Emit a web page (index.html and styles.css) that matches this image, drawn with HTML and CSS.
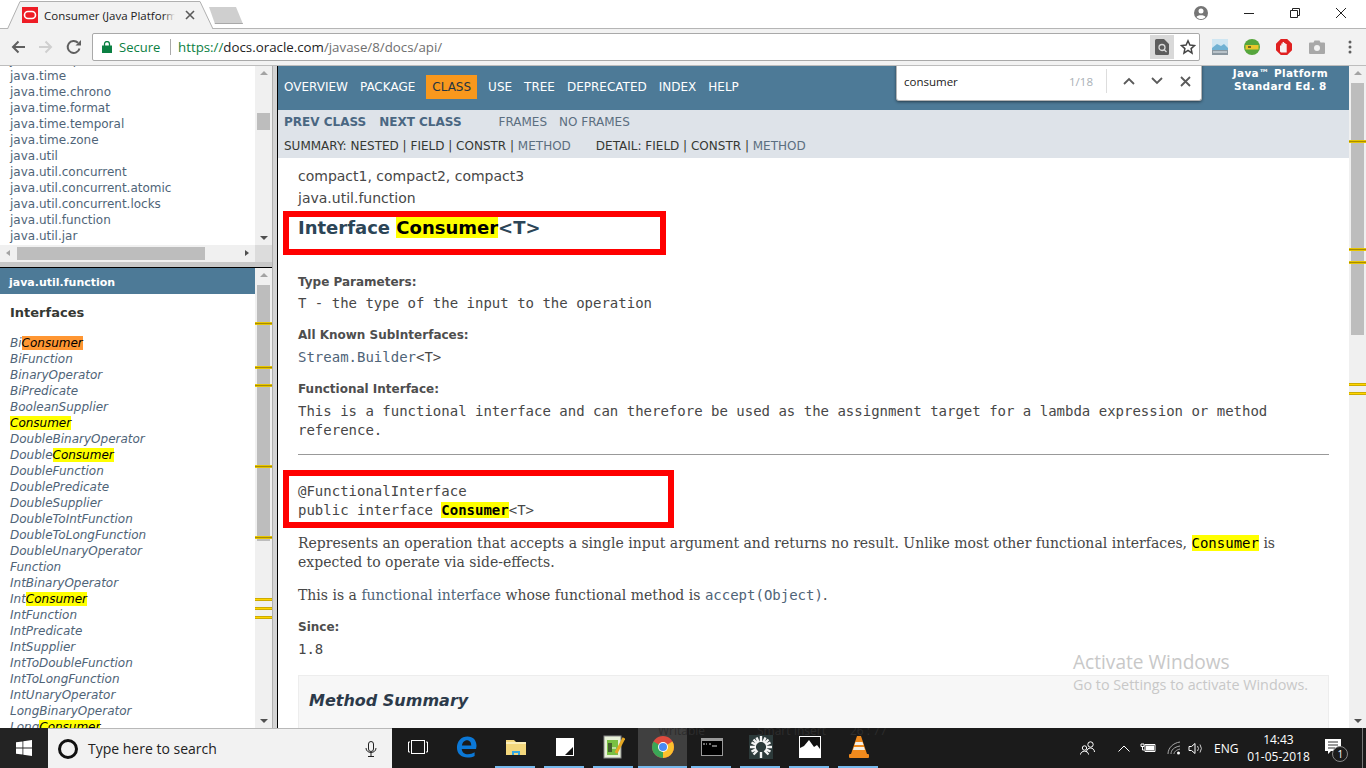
FILE: index.html
```html
<!DOCTYPE html>
<html lang="en">
<head>
<meta charset="utf-8">
<title>Consumer (Java Platform SE 8)</title>
<link rel="stylesheet" href="styles.css">
</head>
<body>
<div class="screen">
  <header class="tabstrip">
    <div class="tab">
      <svg class="tab-shape" width="207" height="29" viewBox="0 0 207 29"><path d="M0.500 28L13 .500H193L206 28" fill="#f2f2f2" stroke="#b0b0b0"/></svg>
      <svg class="favicon" width="16" height="16" viewBox="0 0 16 16"><rect width="16" height="16" fill="#ee1c25"/><rect x="2.500" y="4.500" width="11" height="7" rx="3.500" fill="none" stroke="#fff" stroke-width="1.600"/></svg>
      <span class="tab-title">Consumer (Java Platform</span>
      <svg class="tab-x" width="10" height="10" viewBox="0 0 10 10"><path d="M1 1l8 8M9 1l-8 8" stroke="#5a5a5a" stroke-width="1.600"/></svg>
    </div>
    <div class="newtab"></div>
    <div class="spacer"></div>
    <svg class="profile" width="16" height="16" viewBox="0 0 16 16"><circle cx="8" cy="8" r="7" fill="#757575"/><circle cx="8" cy="6" r="2.500" fill="#fff"/><path d="M3.500 12c1-2.200 8-2.200 9 0-1.200 1.400-2.800 2-4.500 2s-3.300-.6-4.500-2z" fill="#fff"/></svg>
    <div class="winbtns">
      <svg width="12" height="12" viewBox="0 0 12 12"><path d="M1 6.500h10" stroke="#222"/></svg>
      <svg width="12" height="12" viewBox="0 0 12 12"><path d="M1.500 3.500h7v7h-7zM3.500 3.500v-2h7v7h-2" fill="none" stroke="#222"/></svg>
      <svg width="12" height="12" viewBox="0 0 12 12"><path d="M1 1l10 10M11 1l-10 10" stroke="#222"/></svg>
    </div>
  </header>
  <div class="toolbar">
    <svg class="nav-ic" width="16" height="16" viewBox="0 0 16 16"><path d="M15 8H3M8.500 2.500L3 8l5.500 5.500" fill="none" stroke="#5f5f5f" stroke-width="2"/></svg>
    <svg class="nav-ic" width="16" height="16" viewBox="0 0 16 16"><path d="M1 8h12M7.500 2.500L13 8l-5.500 5.500" fill="none" stroke="#cfcfcf" stroke-width="2"/></svg>
    <svg class="nav-ic" width="16" height="16" viewBox="0 0 16 16"><path d="M13.500 9.500A6 6 0 1 1 12 3.800" fill="none" stroke="#5f5f5f" stroke-width="2"/><path d="M9.500 6.500H15V1z" fill="#5f5f5f"/></svg>
    <div class="omnibox">
      <svg class="lock" width="10" height="12" viewBox="0 0 10 12"><rect y="4.500" width="10" height="7.500" fill="#0b8043"/><path d="M2.500 5V3a2.500 2.500 0 0 1 5 0v2" fill="none" stroke="#0b8043" stroke-width="1.300"/></svg>
      <span class="secure">Secure</span>
      <span class="omni-sep"></span>
      <span class="url"><span class="url-s">https://</span><span class="url-h">docs.oracle.com</span>/javase/8/docs/api/</span>
      <span class="spacer"></span>
      <span class="find-ic"><svg width="14" height="16" viewBox="0 0 14 16"><path d="M0 1.500A1.500 1.500 0 0 1 1.500 0H9l5 5v9.500a1.500 1.500 0 0 1-1.500 1.500h-11A1.500 1.500 0 0 1 0 14.500z" fill="#5c5c5c"/><circle cx="7" cy="8.500" r="3" fill="none" stroke="#d9d9d9" stroke-width="1.300"/><path d="M9 10.500l2.500 2.500" stroke="#d9d9d9" stroke-width="1.300"/></svg></span>
      <svg class="star" width="16" height="16" viewBox="0 0 16 16"><path d="M8 1.800l1.900 4.200 4.600.5-3.400 3.100.9 4.500L8 11.300l-4 2.800.9-4.500L1.500 6.500 6.100 6z" fill="none" stroke="#444" stroke-width="1.500"/></svg>
    </div>
    <div class="ext">
      <svg width="16" height="16" viewBox="0 0 16 16"><rect width="16" height="16" fill="#cfe6f2"/><path d="M0 9l5-4 4 2 3-2 4 4v2H0z" fill="#6fb1d3"/><rect y="11" width="16" height="5" fill="#8a97a0"/><path d="M1 13h14" stroke="#e8eef2"/></svg>
      <svg width="16" height="16" viewBox="0 0 16 16"><circle cx="8" cy="8" r="8" fill="#56a63c"/><rect x="1.500" y="6" width="13" height="4.500" fill="#e9c62c"/><path d="M4 8h3" stroke="#4a4a20" stroke-width="1.500"/></svg>
      <svg width="16" height="16" viewBox="0 0 16 16"><path d="M4.800 0h6.400L16 4.800v6.400L11.200 16H4.800L0 11.200V4.800z" fill="#e02020"/><path d="M5 13.500l-1-1V6.500h1.300V4.500h1.300V3h1.500v1h1.300v1h1.300v8.500z" fill="#f6f0f0"/></svg>
      <svg class="cam" width="16" height="14" viewBox="0 0 16 14"><path d="M1 2.500h3.500L5.500.5h5l1 2H15a1 1 0 0 1 1 1V13a1 1 0 0 1-1 1H1a1 1 0 0 1-1-1V3.500a1 1 0 0 1 1-1z" fill="#a8a8a8"/><circle cx="8" cy="8" r="3" fill="#f2f2f2"/></svg>
      <svg class="dots" width="4" height="14" viewBox="0 0 4 14"><circle cx="2" cy="2" r="1.500" fill="#5f5f5f"/><circle cx="2" cy="7" r="1.500" fill="#5f5f5f"/><circle cx="2" cy="12" r="1.500" fill="#5f5f5f"/></svg>
    </div>
  </div>

  <main class="viewport">
    <aside class="leftcol">
      <div class="pkgpane">
        <div class="pkgrow-wrap">
          <ul class="pkglist">
            <li>java.text.spi</li><li>java.time</li><li>java.time.chrono</li><li>java.time.format</li><li>java.time.temporal</li><li>java.time.zone</li><li>java.util</li><li>java.util.concurrent</li><li>java.util.concurrent.atomic</li><li>java.util.concurrent.locks</li><li>java.util.function</li><li>java.util.jar</li>
          </ul>
          <div class="vbar small">
            <span class="arr up"></span>
            <div class="vtrack pkgtrack"><div class="vthumb pkgthumb"></div></div>
            <span class="arr down"></span>
          </div>
        </div>
        <div class="hbar">
          <span class="arr left"></span>
          <div class="hthumb"></div>
          <span class="arr right"></span>
          <span class="corner"></span>
        </div>
      </div>
      <div class="classpane">
        <div class="classmain">
          <div class="classhead">java.util.function</div>
          <h2 class="classtitle">Interfaces</h2>
          <ul class="classlist">
            <li>Bi<mark class="cur">Consumer</mark></li>
            <li>BiFunction</li>
            <li>BinaryOperator</li>
            <li>BiPredicate</li>
            <li>BooleanSupplier</li>
            <li><mark>Consumer</mark></li>
            <li>DoubleBinaryOperator</li>
            <li>Double<mark>Consumer</mark></li>
            <li>DoubleFunction</li>
            <li>DoublePredicate</li>
            <li>DoubleSupplier</li>
            <li>DoubleToIntFunction</li>
            <li>DoubleToLongFunction</li>
            <li>DoubleUnaryOperator</li>
            <li>Function</li>
            <li>IntBinaryOperator</li>
            <li>Int<mark>Consumer</mark></li>
            <li>IntFunction</li>
            <li>IntPredicate</li>
            <li>IntSupplier</li>
            <li>IntToDoubleFunction</li>
            <li>IntToLongFunction</li>
            <li>IntUnaryOperator</li>
            <li>LongBinaryOperator</li>
            <li>Long<mark>Consumer</mark></li>
          </ul>
        </div>
        <div class="vbar lower">
          <span class="arr up"></span>
          <div class="vtrack"><div class="vthumb classthumb"></div></div>
          <span class="arr down"></span>
          <i class="tick t1"></i><i class="tick t2"></i><i class="tick t3"></i><i class="tick t4"></i><i class="tick t5"></i><i class="tick off t6"></i><i class="tick off t7"></i><i class="tick off t8"></i>
        </div>
      </div>
    </aside>
    <div class="divider"></div>
    <section class="docframe">
      <div class="docmain">
        <nav class="topnav">
          <a>OVERVIEW</a><a>PACKAGE</a><a class="active">CLASS</a><a>USE</a><a>TREE</a><a>DEPRECATED</a><a>INDEX</a><a>HELP</a>
          <div class="aboutlang">Java™ Platform<br>Standard Ed. 8</div>
        </nav>
        <div class="subnav">
          <div class="subrow first"><b>PREV CLASS</b><b>NEXT CLASS</b><span class="frames">FRAMES</span><span class="frames">NO FRAMES</span></div>
          <div class="subrow second"><span class="sumtxt">SUMMARY: NESTED | FIELD | CONSTR | <em>METHOD</em></span><span class="sumtxt">DETAIL: FIELD | CONSTR | <em>METHOD</em></span></div>
        </div>
        <article class="doc">
          <div class="subtitle">compact1, compact2, compact3</div>
          <div class="subtitle">java.util.function</div>
          <h1 class="title">Interface <mark>Consumer</mark>&lt;T&gt;</h1>
          <dl class="defs">
            <dt>Type Parameters:</dt>
            <dd class="mono">T - the type of the input to the operation</dd>
            <dt>All Known SubInterfaces:</dt>
            <dd class="mono"><span class="lnk">Stream.Builder</span>&lt;T&gt;</dd>
            <dt>Functional Interface:</dt>
            <dd class="mono">This is a functional interface and can therefore be used as the assignment target for a lambda expression or method reference.</dd>
          </dl>
          <hr class="rule">
          <pre class="decl">@FunctionalInterface
public interface <mark>Consumer</mark>&lt;T&gt;</pre>
          <p class="body">Represents an operation that accepts a single input argument and returns no result. Unlike most other functional interfaces, <code><mark>Consumer</mark></code> is expected to operate via side-effects.</p>
          <p class="body second">This is a <span class="lnk">functional interface</span> whose functional method is <code class="lnk">accept(Object)</code>.</p>
          <div class="since">Since:</div>
          <div class="mono sinceval">1.8</div>
          <div class="summary"><h3>Method Summary</h3></div>
        </article>
      </div>
      <div class="vbar main">
        <span class="arr up"></span>
        <div class="vtrack"><div class="vthumb mainthumb"></div></div>
        <span class="arr down"></span>
        <i class="tick m1"></i><i class="tick m2"></i><i class="tick m3"></i><i class="tick off m4"></i><i class="tick off m5"></i>
      </div>
    </section>
    <div class="findbar">
      <span class="find-q">consumer</span>
      <span class="find-c">1/18</span>
      <span class="find-sep"></span>
      <svg width="12" height="8" viewBox="0 0 12 8"><path d="M1 7l5-5 5 5" fill="none" stroke="#5a5a5a" stroke-width="1.800"/></svg>
      <svg width="12" height="8" viewBox="0 0 12 8"><path d="M1 1l5 5 5-5" fill="none" stroke="#5a5a5a" stroke-width="1.800"/></svg>
      <svg class="find-x" width="11" height="11" viewBox="0 0 11 11"><path d="M1 1l9 9M10 1l-9 9" stroke="#5a5a5a" stroke-width="1.800"/></svg>
    </div>
    <div class="box box1"></div>
    <div class="box box2"></div>
    <div class="watermark"><div class="wm1">Activate Windows</div><div class="wm2">Go to Settings to activate Windows.</div></div>
  </main>

  <footer class="taskbar">
    <div class="startbtn"><svg width="16" height="16" viewBox="0 0 16 16"><path d="M0 2.300l6.500-.9v6.200H0zM7.300 1.300L16 0v7.600H7.300zM0 8.400h6.500v6.200L0 13.700zM7.300 8.400H16V16l-8.700-1.300z" fill="#fff"/></svg></div>
    <div class="searchbox">
      <span class="cortana"></span>
      <span class="searchtxt">Type here to search</span>
      <span class="spacer"></span>
      <svg width="12" height="16" viewBox="0 0 12 16"><rect x="3.500" y=".5" width="5" height="10" rx="2.500" fill="none" stroke="#222"/><path d="M1 7c0 6 10 6 10 0M6 12v3M3 15.500h6" fill="none" stroke="#222"/></svg>
    </div>
    <div class="apps">
      <span class="app"><svg width="20" height="14" viewBox="0 0 20 14"><rect x="3.500" y=".5" width="13" height="13" fill="none" stroke="#fff"/><path d="M2 2H.5v10H2M18 2h1.500v10H18" fill="none" stroke="#fff"/></svg></span>
      <span class="app"><svg width="21" height="22" viewBox="0 0 22 22"><path d="M21 13H6c.3 3.500 3 5.500 6.500 5.500 2.500 0 5-.8 7-2v3.800c-2 1-4.500 1.700-7.500 1.700C5.500 22 1 18 1 11.500 1 5 5.500 0 12 0c6 0 9.500 4 9.500 10zM6.200 9.500H16C16 6.500 14.500 4 11.500 4 8.700 4 6.700 6.500 6.200 9.500z" fill="#0b78d7"/></svg></span>
      <span class="app run"><svg width="22" height="20" viewBox="0 0 22 20"><path d="M1 3h8l2 2h10v13H1z" fill="#f3d77c"/><rect x="1" y="5" width="20" height="2" fill="#fbeeb8"/><path d="M7 18v-4h8v4h-2v-2H9v2z" fill="#36a9e1"/></svg></span>
      <span class="app run"><svg width="18" height="18" viewBox="0 0 18 18"><rect width="18" height="18" fill="#fff"/><path d="M9 17h8V9z" fill="#111"/></svg></span>
      <span class="app run"><svg width="22" height="24" viewBox="0 0 22 24"><rect x="1" y="1" width="17" height="22" fill="#e8f2d8" stroke="#888"/><rect x="4" y="5" width="11" height="15" fill="#79c143"/><path d="M6 8v9M8 8v9" stroke="#222" stroke-width="1.200"/><path d="M9 13h4" stroke="#fff"/><path d="M13 18l8-15" stroke="#e5a823" stroke-width="3"/></svg></span>
      <span class="app active"><svg width="22" height="22" viewBox="0 0 22 22"><circle cx="11" cy="11" r="11" fill="#dd4b3e"/><path d="M11 11L20.500 5.500A11 11 0 0 1 11 22z" fill="#fbc02d"/><path d="M11 11L11 22A11 11 0 0 1 1.500 5.500z" fill="#3aa757"/><circle cx="11" cy="11" r="5" fill="#fff"/><circle cx="11" cy="11" r="4" fill="#4a8af4"/></svg></span>
      <span class="app run"><svg width="22" height="18" viewBox="0 0 22 18"><rect width="22" height="18" fill="#9a9a9a"/><rect x="1" y="3" width="20" height="14" fill="#000"/><path d="M2 6h2M5 6h1M8 6h2M11 8h5" stroke="#ddd"/></svg></span>
      <span class="app run"><svg width="24" height="24" viewBox="0 0 24 24"><rect width="24" height="24" fill="#2c3a3a"/><g stroke="#f4f4f4" stroke-width="2.400"><path d="M12 7V1M12 17v6M7 12H1M17 12h6M8.500 8.500l-4-4M15.500 8.500l4-4M8.500 15.500l-4 4M15.500 15.500l4 4M9.800 7.500L7.500 2.500M14.200 7.500l2.300-5M7.500 9.800L2.500 7.500M16.500 9.800l5-2.300M7.500 14.200l-5 2.300M16.500 14.200l5 2.300"/></g></svg></span>
      <span class="app run"><svg width="22" height="22" viewBox="0 0 22 22"><rect width="22" height="22" fill="#fff"/><rect x="1" y="1" width="20" height="20" fill="#111"/><path d="M1 21v-9l4-2 5-6 5 7 3-2 3 4v8z" fill="#fff"/></svg></span>
      <span class="app run"><svg width="20" height="22" viewBox="0 0 20 22"><path d="M8 0h4l6 18H2z" fill="#f08a1d"/><path d="M6.500 6h7l1 3h-9zM5 11h10l1 3H4z" fill="#f4f1e8"/><rect y="18" width="20" height="4" rx="1" fill="#f08a1d"/></svg></span>
    </div>
    <div class="tray">
      <svg class="tray-people" width="16" height="14" viewBox="0 0 16 14"><circle cx="10.500" cy="3.500" r="2.700" fill="none" stroke="#fff"/><path d="M6.500 11c0-2.500 2-4 4-4s4 1.500 4 4" fill="none" stroke="#fff"/><circle cx="4.500" cy="7" r="2.200" fill="#1a1a1a" stroke="#fff"/><path d="M.5 13.500c0-2 2-3.300 4-3.300s4 1.300 4 3.300" fill="none" stroke="#fff"/></svg>
      <svg class="tray-chev" width="12" height="7" viewBox="0 0 12 7"><path d="M.5 6.500L6 1l5.500 5.500" fill="none" stroke="#fff"/></svg>
      <svg class="tray-bat" width="16" height="10" viewBox="0 0 16 10"><path d="M5 1.500h10v7H5z" fill="none" stroke="#fff"/><rect x="6" y="2.500" width="8" height="5" fill="#fff"/><path d="M1 1v2.500h3V1zM2.500 3.500V7h2" fill="none" stroke="#fff"/></svg>
      <svg class="tray-wifi" width="14" height="14" viewBox="0 0 14 14"><path d="M1 13C1 7 6 2 13 1M4 13c0-4 3-7 9-8M7 13c0-2 2-4 6-5" fill="none" stroke="#aaa"/><circle cx="11.500" cy="12" r="1.500" fill="#fff"/></svg>
      <svg class="tray-vol" width="16" height="13" viewBox="0 0 16 13"><path d="M1 4.500h2.500L7 1.500v10l-3.500-3H1z" fill="none" stroke="#fff"/><path d="M9.500 4a4 4 0 0 1 0 5M12 2.500a7 7 0 0 1 0 8" fill="none" stroke="#ccc"/></svg>
      <span class="lang">ENG</span>
      <span class="clock"><span>14:43</span><span>01-05-2018</span></span>
      <span class="notif"><svg width="18" height="16" viewBox="0 0 18 16"><path d="M0 0h16v12H6l-3 3v-3H0z" fill="#fff"/><path d="M3 3h10M3 6h10M3 9h7" stroke="#333"/></svg><span class="notif-n">1</span></span>
      <span class="showdesk"></span>
    </div>
    <span class="ghost g1">Writable</span>
    <span class="ghost g2">Smart Insert</span>
    <span class="ghost g3">26 : 77</span>
  </footer>
</div>
</body>
</html>
```
FILE: styles.css
```css
* { box-sizing: border-box; }
html, body { margin: 0; padding: 0; overflow: hidden; }
ul { list-style: none; margin: 0; padding: 0; }
mark { background: #ffff00; color: #000; }
mark.cur { background: #ff9632; }
.screen { width: 1366px; height: 768px; display: flex; flex-direction: column; font-family: "DejaVu Sans", sans-serif; background: #fff; overflow: hidden; }
.spacer { flex: 1; }

.tabstrip { height: 29px; flex: none; display: flex; align-items: flex-start; background: #fff; border-bottom: 1px solid #b5b5b5; font-family: "Open Sans", sans-serif; }
.tab { position: relative; margin: 1px 0 0 7px; width: 205px; height: 28px; display: flex; align-items: center; padding: 0 0 0 15px; gap: 6px; }
.tab-shape { position: absolute; left: 0; top: 0; }
.favicon { flex: none; position: relative; }
.tab-title { position: relative; font-size: 11.500px; color: #222; white-space: nowrap; width: 131px; overflow: hidden; }
.tab-title::after { content: ""; position: absolute; right: 0; top: 0; bottom: 0; width: 12px; background: linear-gradient(90deg, rgba(242,242,242,0), #f2f2f2); }
.tab-x { flex: none; margin-left: 4px; position: relative; }
.newtab { margin: 7px 0 0 -3px; width: 34px; height: 17px; background: #cfcfcf; border-bottom: 1px solid #a8a8a8; clip-path: polygon(0 0, 27px 0, 100% 100%, 6px 100%); }
.profile { margin: 5px 34px 0 0; flex: none; }
.winbtns { display: flex; gap: 34px; padding: 7px 19px 0 0; }

.toolbar { height: 37px; flex: none; display: flex; align-items: center; background: #f2f2f2; padding: 0 0 0 10px; border-bottom: 1px solid #bdbdbd; }
.nav-ic { margin-right: 12px; flex: none; }
.omnibox { width: 1108px; flex: none; margin-left: -2px; height: 28px; background: #fff; border: 1px solid #a9a9a9; border-radius: 2px; display: flex; align-items: center; padding: 0 1px 0 9px; font-family: "Open Sans", sans-serif; font-size: 13.300px; }
.lock { margin-right: 7px; flex: none; }
.secure { color: #0b8043; width: 42px; white-space: nowrap; font-size: 13px; }
.omni-sep { width: 1px; height: 16px; background: #aaa; margin: 0 7px 0 9px; }
.url { color: #6f6f6f; white-space: nowrap; }
.url-s { color: #0b8043; }
.url-h { color: #222; }
.find-ic { width: 24px; height: 24px; background: #d9d9d9; display: flex; align-items: center; justify-content: center; margin-right: 6px; flex: none; }
.star { margin-right: 2px; flex: none; }
.ext { display: flex; align-items: center; gap: 16px; margin-left: 12px; flex: none; }
.cam { margin-left: 1px; }
.dots { margin-left: 7px; }

.viewport { position: relative; flex: none; display: flex; height: 662px; overflow: hidden; background: #fff; }
.leftcol { width: 272px; flex: none; display: flex; flex-direction: column; background: #c8c8c8; }
.divider { width: 6px; flex: none; background: linear-gradient(90deg, #b0b0b0 0, #b0b0b0 1px, #d4d4d4 1px, #d4d4d4 5px, #000 5px); }

.pkgpane { height: 196px; flex: none; display: flex; flex-direction: column; background: #fff; }
.pkgrow-wrap { height: 179px; display: flex; overflow: hidden; }
.pkglist { flex: 1; margin-top: -14px; padding-left: 10px; font-size: 12px; line-height: 16px; color: #4f6478; }
.hbar { height: 17px; display: flex; align-items: center; background: #f0f0f0; position: relative; }
.hthumb { position: absolute; left: 17px; width: 188px; top: 2px; height: 13px; background: #bdbdbd; }
.corner { position: absolute; right: 0; top: 0; width: 17px; height: 17px; background: #dcdcdc; }
.arr { width: 0; height: 0; display: block; border-style: solid; border-color: transparent; flex: none; }
.arr.left { position: absolute; left: 6px; top: 5px; border-width: 3.500px 4px 3.500px 0; border-right-color: #a3a3a3; }
.arr.right { position: absolute; left: 245px; top: 5px; border-width: 3.500px 0 3.500px 4px; border-left-color: #505050; }
.vbar { position: relative; width: 17px; flex: none; background: #f0f0f0; display: flex; flex-direction: column; align-items: center; }
.arr.up { margin-top: 5px; border-width: 0 4px 4px; border-bottom-color: #a3a3a3; }
.arr.down { margin-bottom: 5px; border-width: 4px 4px 0; border-top-color: #505050; }
.vtrack { flex: 1; width: 100%; position: relative; }
.vthumb { position: absolute; left: 2px; right: 2px; background: #bdbdbd; }
.pkgthumb { top: 38px; height: 17px; }
.classpane { flex: 1; min-height: 0; margin-top: 5px; border-top: 1px solid #000; display: flex; background: #fff; overflow: hidden; }
.classmain { flex: 1; min-width: 0; overflow: hidden; }
.classhead { height: 26px; background: #4d7a97; color: #fff; font-size: 11px; font-weight: bold; line-height: 30px; padding-left: 9px; }
.classtitle { margin: 0; font-size: 13px; line-height: 16px; padding: 11px 0 0 10px; color: #353833; height: 38px; }
.classlist { padding: 1px 0 0 10px; margin-top: 2px; font-size: 12px; line-height: 16px; font-style: italic; color: #4f6478; white-space: nowrap; }
.classthumb { top: 8px; height: 256px; }
.tick { position: absolute; left: 0; right: 0; height: 3px; background: #a88c00; border-top: 1px solid #e6c400; border-bottom: 1px solid #e6c400; }
.tick.off { background: #ffd500; border-color: #cdab00; }
.t1 { top: 54px; } .t2 { top: 98px; } .t3 { top: 116px; } .t4 { top: 197px; } .t5 { top: 268px; }
.t6 { top: 330px; } .t7 { top: 339px; } .t8 { top: 348px; }

.docframe { flex: 1; min-width: 0; display: flex; }
.docmain { flex: 1; min-width: 0; overflow: hidden; }
.topnav { position: relative; height: 44px; background: #4d7a97; display: flex; align-items: center; gap: 12px; padding: 0 0 2px 6px; font-size: 12px; color: #fff; }
.topnav a { line-height: 14px; white-space: nowrap; }
.topnav a.active { background: #f8981d; color: #253441; padding: 5px 6px; margin: 0 -1px; }
.aboutlang { position: absolute; right: 21px; top: 1px; text-align: center; font-weight: bold; font-size: 10.500px; line-height: 13px; letter-spacing: .35px; }
.subnav { height: 48px; background: #dee3e9; padding-left: 6px; color: #4a6782; font-size: 12px; }
.subrow { display: flex; white-space: nowrap; line-height: 14px; }
.subrow.first { height: 24px; padding-top: 5px; }
.subrow.first b { margin-right: 13px; }
.subrow.first b + b { margin-right: 37px; }
.frames { margin-right: 12px; color: #5b6e80; }
.subrow.second { padding-top: 5px; color: #353833; gap: 25px; }
.sumtxt em { font-style: normal; color: #5b6e80; }

.doc { padding: 7px 20px 0 20px; color: #474747; }
.subtitle { font-size: 14px; line-height: 22px; }
.title { margin: 7px 0 0; font-size: 18px; line-height: 24px; color: #2c4557; height: 58px; font-weight: bold; }
.defs { margin: 0; font-size: 12px; }
.defs dt { font-weight: bold; color: #4e4e4e; line-height: 15px; font-size: 12px; margin-top: 15px; }
.defs dt:first-child { margin-top: 1px; }
.defs dd { margin: 5px 0 0; }
.defs dt:first-child + dd { margin-top: 4px; }
.mono { font-family: "DejaVu Sans Mono", monospace; font-size: 14px; line-height: 19px; color: #474747; }
.lnk { color: #4f6478; }
.rule { border: 0; border-top: 1px solid #999; margin: 14px 0 0; height: 1px; }
.decl { font-family: "DejaVu Sans Mono", monospace; font-size: 14px; line-height: 19px; margin: 27px 0 0; color: #474747; }
.decl mark { font-weight: bold; }
.body { font-family: "DejaVu Serif", serif; font-size: 14px; line-height: 19px; margin: 14px 0 0; color: #474747; }
.body code { font-family: "DejaVu Sans Mono", monospace; font-size: 14px; }
.since { font-size: 12px; font-weight: bold; color: #4e4e4e; line-height: 15px; margin-top: 15px; }
.sinceval { margin-top: 5px; }
.summary { margin-top: 16px; height: 100px; background: #f7f7f7; border: 1px solid #ededed; padding: 15px 10px; }
.summary h3 { margin: 0; font-size: 16px; line-height: 20px; font-style: italic; font-weight: bold; color: #2c3a4a; }

.mainthumb { top: 8px; height: 252px; }
.m1 { top: 74px; } .m2 { top: 182px; } .m3 { top: 195px; } .m4 { top: 317px; } .m5 { top: 326px; }

.findbar { position: absolute; left: 896px; top: -5px; width: 306px; height: 40px; background: #fff; border: 1px solid #b5b5b5; border-top-color: #a0a0a0; border-radius: 0 0 3px 3px; box-shadow: 0 1px 3px rgba(0,0,0,.5); display: flex; align-items: center; padding: 0 10px 0 7px; font-family: "Open Sans", sans-serif; font-size: 11.500px; }
.findbar svg { flex: none; margin-left: 16px; }
.findbar .find-x { margin-left: 17px; }
.find-q { flex: 1; color: #222; }
.find-c { color: #a9b0b6; margin-right: 13px; font-size: 11.500px; }
.find-sep { width: 1px; height: 24px; background: #ddd; margin-right: 0; }
.box { position: absolute; border: 6px solid #ff0000; }
.box1 { left: 283px; top: 145px; width: 383px; height: 44px; }
.box2 { left: 283px; top: 404px; width: 391px; height: 58px; }
.watermark { position: absolute; left: 1073px; top: 586px; color: #c8c8c8; font-family: "Open Sans", sans-serif; }
.wm1 { font-size: 19.100px; line-height: 20px; }
.wm2 { font-size: 14.350px; line-height: 26px; }

.taskbar { position: relative; height: 40px; flex: none; background: #1b1b1b; display: flex; color: #fff; font-family: "Open Sans", sans-serif; overflow: hidden; }
.startbtn { width: 48px; flex: none; display: flex; align-items: center; justify-content: center; background: #232323; }
.searchbox { width: 344px; flex: none; background: #f2f2f2; border-top: 1px solid #b8b8b8; display: flex; align-items: center; padding: 0 15px 0 10px; color: #222; font-size: 14px; }
.cortana { width: 20px; height: 20px; border-radius: 50%; border: 3px solid #111; margin-right: 10px; background: #f2f2f2; }
.apps { display: flex; flex: none; margin-left: 1px; }
.app { width: 49px; display: flex; align-items: center; justify-content: center; padding-bottom: 2px; position: relative; }
.app.run::after, .app.active::after { content: ""; position: absolute; left: 4px; right: 5px; bottom: 0; height: 2px; background: #76b9ed; }
.app.active { background: #404040; }
.app.active::after { left: 0; right: 0; }
.tray { flex: 1; display: flex; align-items: center; padding-left: 197px; font-size: 12px; position: relative; }
.tray svg { flex: none; }
.tray-chev { margin-left: 22px; }
.tray-bat { margin-left: 10px; }
.tray-wifi { margin-left: 11px; }
.tray-vol { margin-left: 7px; }
.lang { margin: 0 7px 0 10px; }
.clock { display: flex; flex-direction: column; align-items: center; line-height: 17px; font-size: 12px; width: 66px; margin-right: 14px; }
.notif { position: relative; display: block; height: 18px; width: 22px; }
.notif-n { position: absolute; left: 7px; top: 7px; width: 16px; height: 16px; border-radius: 50%; border: 1px solid #888; background: #1b1b1b; font-size: 10px; line-height: 14px; text-align: center; }
.showdesk { position: absolute; right: 3px; top: 0; bottom: 0; width: 1px; background: #777; }
.ghost { position: absolute; top: -4px; font-size: 12px; color: #2d2d2d; line-height: 14px; white-space: nowrap; }
.g1 { left: 658px; } .g2 { left: 757px; } .g3 { left: 850px; }
```
